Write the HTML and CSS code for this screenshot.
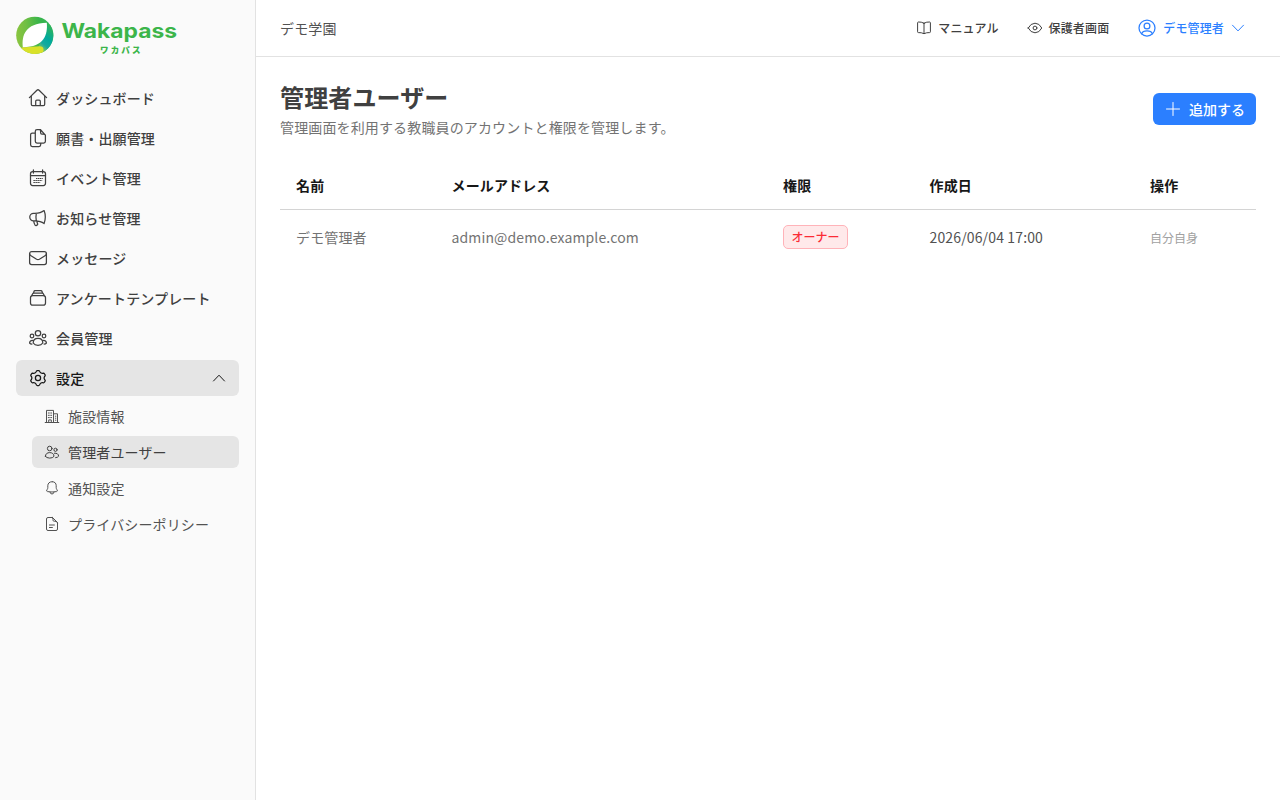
FILE: index.html
```html
<!DOCTYPE html>
<html lang="ja">
<head>
<meta charset="utf-8">
<title>管理者ユーザー | Wakapass</title>
<link rel="stylesheet" href="styles.css">
</head>
<body>
<div class="app">
  <aside class="sidebar">
    <a class="logo">
      <svg class="logo-art" width="168" height="44" viewBox="0 0 168 44" role="img" aria-label="Wakapass">
        <defs>
          <linearGradient id="ring" x1="0" y1="0.55" x2="1" y2="0.45">
            <stop offset="0" stop-color="#8bc53f"/><stop offset="0.3" stop-color="#70bf44"/><stop offset="0.65" stop-color="#39b54a"/><stop offset="1" stop-color="#2fb35a"/>
          </linearGradient>
          <linearGradient id="teal" x1="0.8" y1="0" x2="0.35" y2="1">
            <stop offset="0" stop-color="#39b54a"/><stop offset="0.5" stop-color="#00a99d"/><stop offset="0.75" stop-color="#16aaa0"/><stop offset="1" stop-color="#9acb55"/>
          </linearGradient>
        </defs>
        <circle cx="18.8" cy="23.3" r="18.6" fill="url(#ring)"/>
        <path d="M31 11 34.5 13.5A18.6 18.6 0 0 1 25 40.8Q20 39 23 34Z" fill="url(#teal)"/>
        <path d="M5.7 35.5 20 34.6Q27.500 33 27.500 37.500L27.200 39.900A18.600 18.600 0 0 1 5.700 36.500Z" fill="#d9e129"/>
        <path d="M6.8 35.2C5.500 24 9 11.200 30.8 10.8C31.8 22.500 28.500 35.200 6.8 35.2Z" fill="#fff"/>
        <text class="brand" x="45.5" y="25.6" textLength="115.5" lengthAdjust="spacingAndGlyphs">Wakapass</text>
        <text class="brand-kana" x="84" y="41.3" textLength="40.500" lengthAdjust="spacing">ワカパス</text>
      </svg>
    </a>
    <nav class="menu">
      <a class="item"><svg class="icon" viewBox="0 0 20 20"><path d="m1.4 9.6 7.5-7.4q1.1-.9 2.2 0l7.5 7.4M3.3 8v8.2q0 1.3 1.3 1.3h10.8q1.3 0 1.3-1.3V8M7.7 17.4v-4.2q0-1.1 1.1-1.1h2.4q1.1 0 1.1 1.1v4.2"/></svg>ダッシュボード</a>
      <a class="item"><svg class="icon" viewBox="0 0 20 20"><path d="M12.3 1.5H9q-1.7 0-1.7 1.7v10.1Q7.3 15 9 15h6.7q1.7 0 1.7-1.7V7.200L12.300 1.500ZM11.800 1.6q.800.300.800 1.8v1.4q0 1.3 1.3 1.3h1.4q1.7 0 2 1.1M7.2 5H4.3Q2.6 5 2.6 6.7v10.1q0 1.7 1.7 1.7H11q1.7 0 1.7-1.7V15"/></svg>願書・出願管理</a>
      <a class="item"><svg class="icon" viewBox="0 0 20 20"><rect x="2.5" y="3.6" width="15" height="13.9" rx="2.2"/><path d="M2.5 7.5h15M5.4 1.9v3.2M14.6 1.9v3.2"/><path class="dots" d="M8.4 10.5h6M5.8 12.5h8M5.8 14.5h6"/></svg>イベント管理</a>
      <a class="item"><svg class="icon" viewBox="0 0 20 20"><path d="M16.1 2.6C13.5 4.7 10.4 5.3 6.8 5.3H5.5a3.7 3.7 0 0 0 0 7.5h1.3c3.6 0 6.7.6 9.3 2.7Q17.3 12.3 17.3 9T16.1 2.6ZM8.3 5.4Q7.6 9 8.3 12.8M5.7 12.9q.2 2.5 1.4 4.2.6.7 1.4.3l.8-.5q.7-.5.3-1.3-.7-1.3-.8-2.7"/></svg>お知らせ管理</a>
      <a class="item"><svg class="icon" viewBox="0 0 20 20"><rect x="1.6" y="3.5" width="16.8" height="13" rx="2.1"/><path d="M1.7 5.7q.1 1.4 1.3 2.1l5.6 3.4q1.4.8 2.8 0L17 7.8q1.2-.7 1.3-2.1"/></svg>メッセージ</a>
      <a class="item"><svg class="icon" viewBox="0 0 20 20"><rect x="2.5" y="7.5" width="15" height="9.7" rx="2.2"/><path d="M3.8 7.6 4.5 6q.3-.8 1.2-.8h8.6q.9 0 1.2.8l.7 1.6M5.5 5.1l.4-1.5q.2-.9 1.2-.9h5.8q1 0 1.2.9l.4 1.5"/></svg>アンケートテンプレート</a>
      <a class="item"><svg class="icon" viewBox="0 0 20 20"><circle cx="10" cy="5.2" r="2.7"/><circle cx="4" cy="8" r="1.8"/><circle cx="16" cy="8" r="1.8"/><path d="M5.2 15c0-3.3 2.3-4.6 4.8-4.6s4.8 1.3 4.8 4.6Q13.3 17.3 10 17.3T5.2 15ZM4.6 12.3q-3 .1-3 2.8.8 1 2.3 1M15.4 12.3q3 .1 3 2.8-.8 1-2.3 1"/></svg>会員管理</a>
      <a class="item item-open"><svg class="icon" viewBox="0 0 20 20"><path d="m8 3 .5-1q.3-.5.8-.5h1.4q.5 0 .8.5l.5 1q.9 1.400 2.500 1.300l1.100-.1q.5 0 .8.5l.7 1.200q.3.500 0 .9l-.6.900q-.9 1.300 0 2.600l.6.900q.3.400 0 .900l-.7 1.200q-.3.500-.8.500l-1.100-.1q-1.600-.1-2.500 1.300l-.5 1q-.3.500-.8.500H9.300q-.5 0-.8-.5L8 15q-.9-1.400-2.500-1.300l-1.100.1q-.5 0-.8-.5l-.7-1.200q-.3-.500 0-.900l.6-.900q.9-1.300 0-2.600l-.6-.900q-.3-.400 0-.900l.7-1.200q.3-.500.8-.500l1.100.1Q7.100 4.400 8 3Z" transform="translate(0 1)"/><circle cx="10" cy="10" r="2.600"/></svg>設定<svg class="chevron" viewBox="0 0 16 16"><path d="m2.500 11 5.500-5.800L13.500 11"/></svg></a>
      <div class="submenu">
        <a class="subitem"><svg class="icon-sm" viewBox="0 0 16 16"><path d="M1.2 14.5h13.6M2.5 14.4v-12h7v12M9.5 5.8h4v8.6M4.7 14.3v-2.4h2.6v2.4M4.3 5h1M6.7 5h1M4.3 7.3h1M6.7 7.3h1M4.3 9.6h1M6.7 9.6h1M11.3 8.2h.6M11.3 10.2h.6M11.3 12.2h.6"/></svg>施設情報</a>
        <a class="subitem subitem-active"><svg class="icon-sm" viewBox="0 0 16 16"><circle cx="5.7" cy="4.5" r="2.3"/><circle cx="11.5" cy="5.8" r="1.6"/><path d="M1.4 12.3c0-2.4 1.8-3.7 4.3-3.7S10 9.9 10 12.3q-1.2 1.8-4.3 1.8t-4.3-1.8ZM10.4 9.2q4.1-.3 4.2 3-.7 1.3-3 1.5"/></svg>管理者ユーザー</a>
        <a class="subitem"><svg class="icon-sm" viewBox="0 0 16 16"><path d="M8 1.7c-2.5 0-4.2 1.6-4.2 4v2q0 1-.7 1.9-1.3 1.7.4 2 4.5.8 9 0 1.700-.3.400-2-.7-.9-.7-1.900v-2c0-2.400-1.400-4-3.800-4ZM6 12.300Q6.300 14 8 14t2-1.700"/></svg>通知設定</a>
        <a class="subitem"><svg class="icon-sm" viewBox="0 0 16 16"><path d="M8.5 1.5H4q-1.5 0-1.5 1.5v10q0 1.5 1.5 1.5h8q1.5 0 1.5-1.500V6.500L8.500 1.500ZM8 1.600q1 .2 1 1.800v.8q0 1 1 1h.9q2.200 0 2.600 1.600M5.400 9h5M5.400 11.500h3"/></svg>プライバシーポリシー</a>
      </div>
    </nav>
  </aside>
  <div class="page">
    <header class="topbar">
      <span class="school">デモ学園</span>
      <div class="actions">
        <a class="action"><svg class="icon-sm" viewBox="0 0 16 16"><path d="M8 3.200Q5.200 1.700 2.300 2q-.7.100-.7.800v9q0 .8.8.8 3-.2 5.600 1.100 2.600-1.300 5.600-1.100.8 0 .8-.8v-9q0-.7-.7-.8Q10.800 1.700 8 3.200Zm0 0v10.400"/></svg>マニュアル</a>
        <a class="action"><svg class="icon-sm" viewBox="0 0 16 16"><path d="M1.200 8Q3.700 3.200 8 3.200T14.800 8Q12.300 12.800 8 12.800T1.200 8Z"/><circle cx="8" cy="8" r="1.900"/></svg>保護者画面</a>
        <a class="action account"><svg class="icon-md" viewBox="0 0 20 20"><circle cx="10" cy="10" r="8"/><circle cx="10" cy="8" r="2.900"/><path d="M4.600 15.800q1.100-2.900 5.400-2.900t5.400 2.900"/></svg>デモ管理者<svg class="chevron" viewBox="0 0 16 16"><path d="m2.500 5.200 5.500 5.700 5.500-5.700"/></svg></a>
      </div>
    </header>
    <main class="content">
      <div class="heading">
        <div>
          <h1>管理者ユーザー</h1>
          <p>管理画面を利用する教職員のアカウントと権限を管理します。</p>
        </div>
        <button class="add"><svg class="plus" viewBox="0 0 16 16"><path d="M8 1.500v13M1.500 8h13"/></svg>追加する</button>
      </div>
      <table class="users">
        <colgroup><col class="c-name"><col class="c-mail"><col class="c-role"><col class="c-date"><col></colgroup>
        <thead><tr><th>名前</th><th>メールアドレス</th><th>権限</th><th>作成日</th><th>操作</th></tr></thead>
        <tbody><tr><td>デモ管理者</td><td>admin@demo.example.com</td><td><span class="badge">オーナー</span></td><td class="date">2026/06/04 17:00</td><td><span class="self">自分自身</span></td></tr></tbody>
      </table>
    </main>
  </div>
</div>
</body>
</html>
```

FILE: styles.css
```css
* { box-sizing: border-box; }
body {
  margin: 0;
  background: #fff;
  color: #404040;
  font: 14px/20px "Noto Sans CJK JP", sans-serif;
  letter-spacing: .14px;
}
svg { flex: none; fill: none; stroke: currentColor; stroke-linecap: round; stroke-linejoin: round; }
.app { display: flex; height: 800px; }
.sidebar { width: 256px; flex: none; padding: 12px 16px; background: #fafafa; border-right: 1px solid #e2e2e2; }
.logo, .logo-art { display: block; height: 44px; stroke: none; letter-spacing: 0; }
.brand { fill: #3cb54a; font: 700 20px "Inter", sans-serif; }
.brand-kana { fill: #3cb54a; font: 900 8.5px "Noto Sans CJK JP", sans-serif; }
.menu { display: flex; flex-direction: column; gap: 4px; margin-top: 24px; }
.item { display: flex; align-items: center; gap: 8px; height: 36px; padding: 0 12px; border-radius: 6px; font-weight: 500; }
.item-open { background: #e5e5e5; color: #171717; }
.icon { width: 20px; height: 20px; stroke-width: 1.25; }
.dots { stroke-dasharray: .7 1.3; stroke-width: 1; }
.icon-sm { width: 16px; height: 16px; stroke-width: 1; }
.icon-md { width: 20px; height: 20px; stroke-width: 1.25; }
.chevron { width: 16px; height: 16px; stroke-width: 1; }
.item-open .chevron { margin-left: auto; }
.submenu { display: flex; flex-direction: column; gap: 4px; padding-left: 16px; }
.subitem { display: flex; align-items: center; gap: 8px; height: 32px; padding: 0 12px; border-radius: 6px; color: #525252; }
.subitem-active { background: #e5e5e5; color: #404040; }
.page { flex: 1; min-width: 0; }
.topbar { display: flex; align-items: center; justify-content: space-between; height: 57px; padding: 0 24px; border-bottom: 1px solid #e2e2e2; }
.school { color: #525252; }
.actions { display: flex; align-items: center; gap: 28px; padding-right: 10px; font-size: 12px; font-weight: 500; }
.action { display: flex; align-items: center; gap: 6px; }
.account { color: #2b7fff; }
.content { padding: 24px; }
.heading { display: flex; align-items: center; justify-content: space-between; height: 56px; }
h1 { margin: 0; font-size: 24px; line-height: 32px; }
p { margin: 4px 0 0; color: #737373; }
.add { display: flex; align-items: center; gap: 8px; height: 32px; padding: 0 11px 0 12px; border: 0; border-radius: 6px; background: #2b7fff; color: #fff; font: 500 14px/20px "Noto Sans CJK JP", sans-serif; }
.plus { width: 16px; height: 16px; stroke-width: 1; }
.users { width: 100%; margin-top: 24px; table-layout: fixed; border-collapse: separate; border-spacing: 0; text-align: left; }
.c-name { width: 155.5px; }
.c-mail { width: 331.5px; }
.c-role { width: 146.5px; }
.c-date { width: 220.5px; }
th { height: 49px; padding: 0 16px; border-bottom: 1px solid #d4d4d4; color: #171717; font-weight: 700; }
td { height: 54px; padding: 0 16px; color: #737373; }
.badge { display: inline-flex; align-items: center; height: 24px; padding: 0 7.5px; border: 1px solid #ffb3b9; border-radius: 5px; background: #ffe9ea; color: #fb2c36; font-size: 12px; font-weight: 500; letter-spacing: 0; vertical-align: middle; }
.date { color: #525252; }
.self { color: #a1a1a1; font-size: 12px; letter-spacing: 0; }
```
